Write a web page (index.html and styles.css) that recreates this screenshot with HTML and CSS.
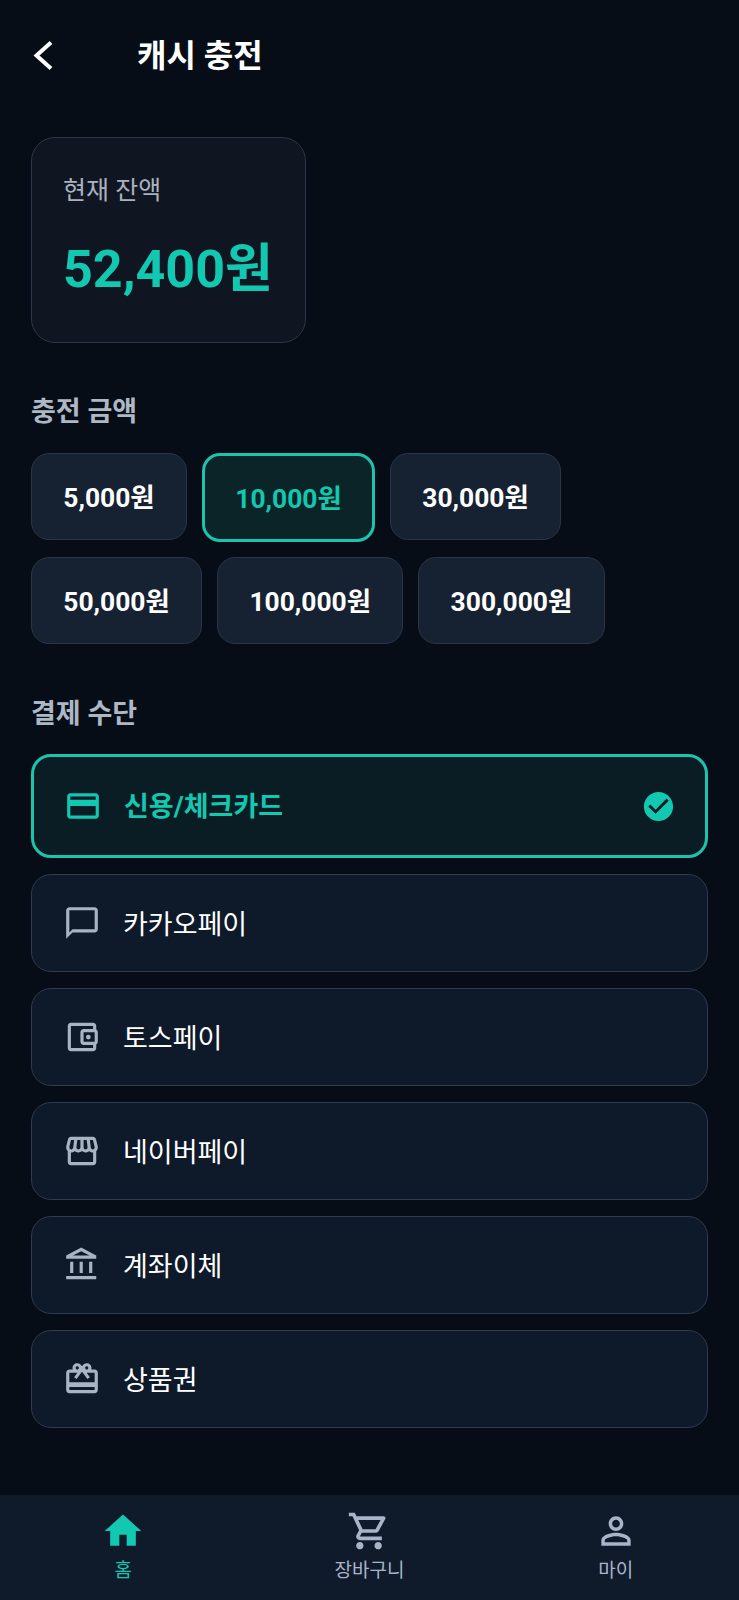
FILE: index.html
```html
<!DOCTYPE html>
<html lang="ko">
<head>
    <meta charset="UTF-8">
    <meta name="viewport" content="width=device-width, initial-scale=1.0">
    <title>캐시 충전</title>
    <link rel="stylesheet" href="styles.css">
</head>
<body>
    <div class="page">
        <header class="top-bar">
            <svg class="back-icon" viewBox="0 0 20 31"><path d="M18 2.5 L3.5 15.5 L18 28.5" fill="none" stroke="currentColor" stroke-width="4"/></svg>
            <h1 class="page-title">캐시 충전</h1>
        </header>

        <main class="content">
            <section class="balance-card">
                <div class="balance-label">현재 잔액</div>
                <div class="balance-amount">52,400원</div>
            </section>

            <h2 class="section-title">충전 금액</h2>
            <div class="chips">
                <div class="chip">5,000원</div>
                <div class="chip chip-active">10,000원</div>
                <div class="chip">30,000원</div>
                <div class="chip">50,000원</div>
                <div class="chip">100,000원</div>
                <div class="chip">300,000원</div>
            </div>

            <h2 class="section-title section-title-pay">결제 수단</h2>
            <div class="pay-list">
                <div class="pay-row pay-row-active">
                    <svg class="pay-icon" viewBox="0 0 24 24"><path d="M20 4H4c-1.11 0-1.99.89-1.99 2L2 18c0 1.11.89 2 2 2h16c1.11 0 2-.89 2-2V6c0-1.11-.89-2-2-2zm0 14H4v-6h16v6zm0-10H4V6h16v2z"/></svg>
                    <span class="pay-name">신용/체크카드</span>
                    <svg class="check-icon" viewBox="0 0 24 24"><path d="M12 2C6.48 2 2 6.48 2 12s4.48 10 10 10 10-4.48 10-10S17.52 2 12 2zm-2 15l-5-5 1.41-1.41L10 14.17l7.59-7.59L19 8l-9 9z"/></svg>
                </div>
                <div class="pay-row">
                    <svg class="pay-icon" viewBox="0 0 24 24"><path d="M20 2H4c-1.1 0-2 .9-2 2v18l4-4h14c1.1 0 2-.9 2-2V4c0-1.1-.9-2-2-2zm0 14H6l-2 2V4h16v12z"/></svg>
                    <span class="pay-name">카카오페이</span>
                </div>
                <div class="pay-row">
                    <svg class="pay-icon" viewBox="0 0 24 24"><path d="M21 7.28V5c0-1.1-.9-2-2-2H5c-1.11 0-2 .9-2 2v14c0 1.1.89 2 2 2h14c1.1 0 2-.9 2-2v-2.28c.59-.35 1-.98 1-1.72V9c0-.74-.41-1.37-1-1.72zM20 9v6h-7V9h7zM5 19V5h14v2h-6c-1.1 0-2 .9-2 2v6c0 1.1.9 2 2 2h6v2H5z"/><circle cx="16" cy="12" r="1.5"/></svg>
                    <span class="pay-name">토스페이</span>
                </div>
                <div class="pay-row">
                    <svg class="pay-icon" viewBox="0 0 24 24"><path d="M21.9 8.89l-1.05-4.37c-.22-.9-1-1.52-1.91-1.52H5.05c-.9 0-1.69.63-1.9 1.52L2.1 8.89c-.24 1.02-.02 2.06.62 2.88.08.11.19.19.28.29V19c0 1.1.9 2 2 2h14c1.1 0 2-.9 2-2v-6.94c.09-.09.2-.18.28-.28.64-.82.87-1.87.62-2.89zm-2.99-3.9l1.05 4.37c.1.42.01.84-.25 1.17-.14.18-.44.47-.94.47-.61 0-1.14-.49-1.21-1.14L16.98 5l1.93-.01zM13 5h1.96l.54 4.52c.05.39-.07.78-.33 1.07-.22.26-.54.41-.95.41-.67 0-1.22-.59-1.22-1.31V5zM8.49 9.52L9.04 5H11v4.69c0 .72-.55 1.31-1.29 1.31-.34 0-.65-.15-.89-.41-.25-.29-.37-.68-.33-1.07zm-4.45-.16L5.05 5h1.97l-.58 4.86c-.08.65-.6 1.14-1.21 1.14-.49 0-.8-.29-.93-.47-.27-.32-.36-.75-.26-1.17zM5 19v-6.03c.08.01.15.03.23.03.87 0 1.66-.36 2.24-.95.6.6 1.4.95 2.31.95.87 0 1.65-.36 2.23-.93.59.57 1.39.93 2.29.93.84 0 1.64-.35 2.24-.95.58.59 1.37.95 2.24.95.08 0 .15-.02.23-.03V19H5z"/></svg>
                    <span class="pay-name">네이버페이</span>
                </div>
                <div class="pay-row">
                    <svg class="pay-icon" viewBox="0 0 24 24"><path d="M6.5 10h-2v7h2v-7zm6 0h-2v7h2v-7zm8.5 9H2v2h19v-2zm-2.5-9h-2v7h2v-7zm-7-6.74L16.71 6H6.29l5.21-2.74m0-2.26L2 6v2h19V6l-9.5-5z"/></svg>
                    <span class="pay-name">계좌이체</span>
                </div>
                <div class="pay-row">
                    <svg class="pay-icon" viewBox="0 0 24 24"><path d="M20 6h-2.18c.11-.31.18-.65.18-1 0-1.66-1.34-3-3-3-1.05 0-1.96.54-2.5 1.35l-.5.67-.5-.68C10.96 2.54 10.05 2 9 2 7.34 2 6 3.34 6 5c0 .35.07.69.18 1H4c-1.11 0-1.99.89-1.99 2L2 19c0 1.11.89 2 2 2h16c1.11 0 2-.89 2-2V8c0-1.11-.89-2-2-2zm-5-2c.55 0 1 .45 1 1s-.45 1-1 1-1-.45-1-1 .45-1 1-1zM9 4c.55 0 1 .45 1 1s-.45 1-1 1-1-.45-1-1 .45-1 1-1zm11 15H4v-2h16v2zm0-5H4V8h5.08L7 10.83 8.62 12 11 8.76l1-1.36 1 1.36L15.38 12 17 10.83 14.92 8H20v6z"/></svg>
                    <span class="pay-name">상품권</span>
                </div>
            </div>
        </main>

        <nav class="bottom-nav">
            <div class="nav-item nav-item-active">
                <svg class="nav-icon" viewBox="0 0 24 24"><path d="M10 20v-6h4v6h5v-8h3L12 3 2 12h3v8z"/></svg>
                <span class="nav-label">홈</span>
            </div>
            <div class="nav-item">
                <svg class="nav-icon" viewBox="0 0 24 24"><path d="M15.55 13c.75 0 1.41-.41 1.75-1.03l3.58-6.49c.37-.66-.11-1.48-.87-1.48H5.21l-.94-2H1v2h2l3.6 7.59-1.35 2.44C4.52 15.37 5.48 17 7 17h12v-2H7l1.1-2h7.45zM6.16 6h12.15l-2.76 5H8.53L6.16 6zM7 18c-1.1 0-1.99.9-1.99 2S5.9 22 7 22s2-.9 2-2-.9-2-2-2zm10 0c-1.1 0-1.99.9-1.99 2s.89 2 1.99 2 2-.9 2-2-.9-2-2-2z"/></svg>
                <span class="nav-label">장바구니</span>
            </div>
            <div class="nav-item">
                <svg class="nav-icon" viewBox="0 0 24 24"><path d="M12 5.9c1.16 0 2.1.94 2.1 2.1s-.94 2.1-2.1 2.1S9.9 9.16 9.9 8s.94-2.1 2.1-2.1m0 9c2.97 0 6.1 1.46 6.1 2.1v1.1H5.9V17c0-.64 3.13-2.1 6.1-2.1M12 4C9.79 4 8 5.79 8 8s1.79 4 4 4 4-1.79 4-4-1.79-4-4-4zm0 9c-2.67 0-8 1.34-8 4v3h16v-3c0-2.66-5.33-4-8-4z"/></svg>
                <span class="nav-label">마이</span>
            </div>
        </nav>
    </div>
</body>
</html>
```

FILE: styles.css
```css
* {
    box-sizing: border-box;
}
body {
    margin: 0;
    background-color: #060d17;
    color: #ffffff;
    font-family: Roboto, "Noto Sans CJK KR", sans-serif;
}
.page {
    display: flex;
    flex-direction: column;
    height: 1600px;
}

/* header */
.top-bar {
    display: flex;
    align-items: center;
    height: 110px;
    padding-left: 33px;
}
.back-icon {
    width: 20px;
    height: 31px;
    color: #ffffff;
}
.page-title {
    margin: 2px 0 0 84px;
    font-size: 32px;
    font-weight: 700;
    line-height: 40px;
}

.content {
    flex: 1;
    padding: 27px 31px 0;
}

/* balance */
.balance-card {
    width: 275px;
    height: 206px;
    padding: 35px 31px 0;
    background-color: #101522;
    border: 1px solid #2e3548;
    border-radius: 24px;
}
.balance-label {
    font-size: 25px;
    line-height: 36px;
    color: #a9b2bf;
}
.balance-amount {
    margin-top: 26px;
    font-size: 52px;
    font-weight: 700;
    line-height: 70px;
    color: #12c8b0;
    white-space: nowrap;
}

/* amount chips */
.section-title {
    margin: 50px 0 22px;
    font-size: 27px;
    font-weight: 700;
    line-height: 38px;
    color: #aeb8c5;
}
.section-title-pay {
    margin: 51px 0 21px;
}
.chips {
    display: flex;
    flex-wrap: wrap;
    align-items: flex-start;
    gap: 15px;
}
.chip {
    padding: 0 31.3px 3px;
    height: 87px;
    display: flex;
    align-items: center;
    background-color: #162232;
    border: 1px solid #2a3546;
    border-radius: 18px;
    font-size: 26.4px;
    font-weight: 700;
}
.chip-active {
    height: 89px;
    padding: 0 30.3px 3px;
    background-color: #0a2428;
    border: 3px solid #1cc4ad;
    color: #12c8b0;
}

/* payment methods */
.pay-list {
    display: flex;
    flex-direction: column;
    gap: 16px;
}
.pay-row {
    display: flex;
    align-items: center;
    gap: 22px;
    height: 98px;
    padding: 0 33px 0 31px;
    background-color: #0e1a2a;
    border: 1px solid #2f3b4e;
    border-radius: 20px;
    color: #ffffff;
}
.pay-row-active {
    height: 104px;
    padding: 0 29px 0 30px;
    background-color: #0a1d24;
    border: 3px solid #1cc4ad;
    color: #12c8b0;
}
.pay-icon {
    width: 38px;
    height: 38px;
    flex-shrink: 0;
    fill: #a9b4c2;
}
.pay-row-active .pay-icon {
    fill: #12c8b0;
}
.pay-name {
    flex: 1;
    padding-top: 4px;
    font-size: 27px;
    line-height: 36px;
}
.pay-row-active .pay-name {
    padding-top: 2px;
    font-weight: 700;
}
.check-icon {
    width: 35px;
    height: 35px;
    fill: #12c8b0;
}

/* bottom nav */
.bottom-nav {
    display: grid;
    grid-template-columns: repeat(3, 1fr);
    height: 105px;
    padding-top: 14px;
    background-color: #0f1b2b;
}
.nav-item {
    display: flex;
    flex-direction: column;
    align-items: center;
    color: #a9b4c8;
}
.nav-item-active {
    color: #12c8b0;
}
.nav-icon {
    width: 44px;
    height: 44px;
    fill: currentColor;
}
.nav-label {
    margin-top: 5px;
    font-size: 19px;
    line-height: 26px;
}
```
